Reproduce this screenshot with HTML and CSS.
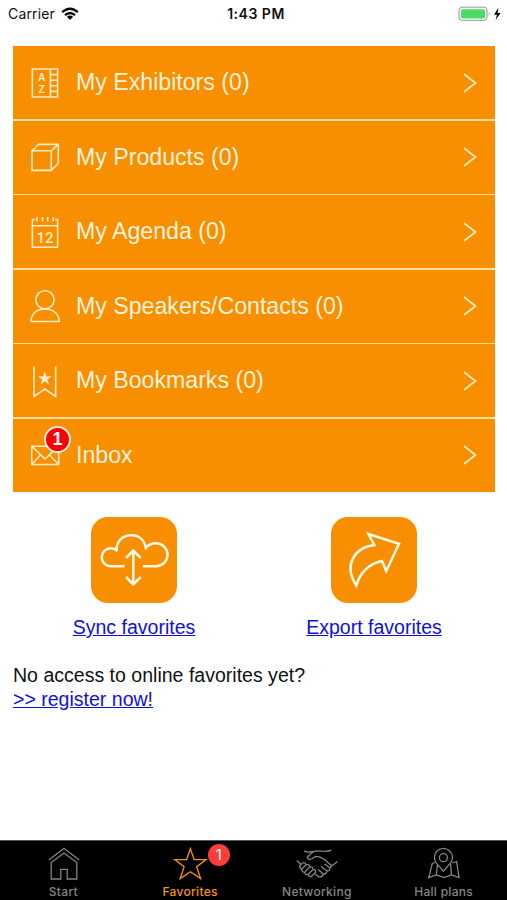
FILE: index.html
```
<!DOCTYPE html>
<html lang="en">
  <head>
    <meta charset="UTF-8" />
    <meta name="viewport" content="width=device-width, initial-scale=1.0" />
    <title>Favorites</title>
    <link rel="stylesheet" href="styles.css">
  </head>
  <body>
    <header class="status">
      <div class="carrier">
        <span>Carrier</span>
        <svg width="18" height="14" viewBox="0 0 18 14" fill="none" stroke="#000" stroke-width="2.3">
          <path d="M1.2 5.2Q9-1.8 16.8 5.2M4 8.2Q9 3.8 14 8.2" />
          <path d="M5.9 9.7Q9 7.2 12.1 9.7L9 13Z" fill="#000" stroke="none" />
        </svg>
      </div>
      <div class="time">1:43 PM</div>
      <div class="power">
        <svg width="44" height="16" viewBox="0 0 44 16">
          <rect x="1" y="1.2" width="28" height="13.2" rx="3.6" fill="#fff" stroke="#a9a9a9" stroke-width="1.3" />
          <rect x="3" y="3.2" width="24" height="9.2" rx="1.6" fill="#4cd964" />
          <path d="M30.8 5.5q2 2.3 0 4.6z" fill="#a9a9a9" />
          <path d="M40.5 1.5L36 8.7h3l-1.4 5.4 5-7.2h-3.1z" fill="#000" />
        </svg>
      </div>
    </header>

    <main class="content">
      <nav class="menu">
        <a class="row">
          <svg class="icon" viewBox="0 0 36 36">
            <path d="M5.4 4H30.6V32H5.4ZM23.4 4V32M23.4 9.6h7M23.4 15.2h7M23.4 20.8h7M23.4 26.4h7" />
            <text class="letters" x="14.6" y="16">A</text>
            <text class="letters" x="14.6" y="28.4">Z</text>
          </svg>
          <span>My Exhibitors (0)</span>
          <svg class="chevron" viewBox="0 0 14 20"><path d="M1 1L12.5 10 1 19" /></svg>
        </a>
        <a class="row">
          <svg class="icon" viewBox="0 0 36 36">
            <path d="M5 11.8H24.3V31.4H5ZM5 11.8L11.7 5.4H31.3V24.5L24.3 31.4M24.3 11.8L31.3 5.4" />
          </svg>
          <span>My Products (0)</span>
          <svg class="chevron" viewBox="0 0 14 20"><path d="M1 1L12.5 10 1 19" /></svg>
        </a>
        <a class="row">
          <svg class="icon" viewBox="0 0 36 36">
            <path d="M8 5.5H5.4V33.3H30.6V5.5H28M5.4 11.8H30.6M10 3v4.5M15.5 3v4.5M20.7 3v4.5M26.2 3v4.5" />
            <text class="day" x="18" y="28.8">12</text>
          </svg>
          <span>My Agenda (0)</span>
          <svg class="chevron" viewBox="0 0 14 20"><path d="M1 1L12.5 10 1 19" /></svg>
        </a>
        <a class="row">
          <svg class="icon" viewBox="0 0 36 36">
            <circle cx="18" cy="11.8" r="9.1" />
            <path d="M4 33.5C4.2 25.5 10 21 18 21S32 25.5 32.2 33.5Z" />
          </svg>
          <span>My Speakers/Contacts (0)</span>
          <svg class="chevron" viewBox="0 0 14 20"><path d="M1 1L12.5 10 1 19" /></svg>
        </a>
        <a class="row">
          <svg class="icon" viewBox="0 0 36 36">
            <path d="M7 3.2V33.5L17.8 26 28.6 33.5V3.2" />
            <path class="solid" d="M17.8 8.4l1.7 4.9 5.1.1-4.1 3.1 1.5 5-4.2-3-4.2 3 1.5-5-4.1-3.1 5.1-.1z" />
          </svg>
          <span>My Bookmarks (0)</span>
          <svg class="chevron" viewBox="0 0 14 20"><path d="M1 1L12.5 10 1 19" /></svg>
        </a>
        <a class="row">
          <div class="with-badge">
            <svg class="icon" viewBox="0 0 36 36">
              <path d="M4.7 9.2H31.7V27.5H4.7ZM4.7 9.2L18 22 31.7 9.2M4.7 27.5L13.5 18M31.7 27.5L22.5 18" />
            </svg>
            <span class="badge">1</span>
          </div>
          <span>Inbox</span>
          <svg class="chevron" viewBox="0 0 14 20"><path d="M1 1L12.5 10 1 19" /></svg>
        </a>
      </nav>

      <div class="actions">
        <div class="action">
          <svg class="tile" viewBox="0 0 86 86">
            <path d="M33.5 49.2H19.7A9 9 0 0 1 19.7 31.2Q23.5 31.2 26.5 34M25.6 33.4C25.2 24.5 31.5 18.2 40.2 18.2 48.2 18.2 54 23.2 55 32.5M54.3 31.2C57.5 27.5 61.5 26.2 65 26.2A11.5 11.5 0 0 1 65 49.2H51.6" />
            <path d="M42.3 34V67M35 41L42.3 33.6 49.8 41M35 60L42.3 67.4 49.8 60" />
          </svg>
          <a class="link" href="#">Sync favorites</a>
        </div>
        <div class="action">
          <svg class="tile" viewBox="0 0 86 86">
            <path d="M37.3 17L68 26.7 55.2 54.2 51 44C39.5 46.5 29.5 54.5 25.3 68.6 12.5 49 22.5 30.5 43.3 28Z" />
          </svg>
          <a class="link" href="#">Export favorites</a>
        </div>
      </div>

      <p class="note">No access to online favorites yet?<br><a class="link" href="#">&gt;&gt; register now!</a></p>
    </main>

    <footer class="tabs">
      <a class="tab">
        <svg viewBox="0 0 44 36">
          <path d="M7.8 14L23 2.3 38.3 14M10.2 16.5V33H19.8V23.3H26.2V33H35.8V16.5L23 7Z" />
        </svg>
        <span>Start</span>
      </a>
      <a class="tab active">
        <svg viewBox="0 0 44 36">
          <path d="M22.4 2.8L26.2 13.6H38L28.7 20.8 32.6 32.6 22.4 25.8 12.2 32.6 16.1 20.8 6.8 13.6H18.6Z" />
        </svg>
        <span class="tab-badge">1</span>
        <span>Favorites</span>
      </a>
      <a class="tab">
        <svg viewBox="0 0 44 36">
          <path d="M9 5.2Q13 6.8 18 5.4M36.5 4.2Q32.5 5.8 26.5 5.2Q20 4 16.3 7L12.3 11.3Q13 14.4 16.5 13L20.5 10.4Q26 10.6 30 14L36 19.2Q37 21.3 34.6 21.6L29.5 18M42.5 15.5Q40.5 17 36.5 20M34.6 21.6Q35.5 25 32 25L26 20.5M32 25Q31.5 28.3 28.5 28L23 23.5M28.5 28Q27.5 31.5 24 30.8L20 28" />
          <path d="M1.8 14.5L5.5 18M5.5 22.5Q3.8 20.5 5.5 18.8L8 16.8Q10.8 16.3 11 19L6.5 23.2Q5.8 23.3 5.5 22.5M11 19Q14.6 17.8 14.8 21L9.5 26.4Q6.3 26.2 7 23M14.8 21Q18.3 20.2 18 23.5L13 28.5Q10 29 9.8 26.2M18 23.5Q21 23.2 20.7 26.2L16.5 30.5Q13.5 31 13.3 28.2" />
        </svg>
        <span>Networking</span>
      </a>
      <a class="tab">
        <svg viewBox="0 0 44 36">
          <path d="M21.4 25.2L14.2 16.8A9 9 0 1 1 28.6 16.8Z" />
          <circle cx="21.4" cy="11.7" r="4" />
          <path d="M13 16.5L10.3 17.5 6.7 31.7 14.3 29 22 31.5 29.5 29 37 31.5 34.6 15.5 30 17M14.3 29L15.4 19M29.5 29L28.6 18" />
        </svg>
        <span>Hall plans</span>
      </a>
    </footer>
  </body>
</html>
```
FILE: styles.css
```
* {
  padding: 0;
  margin: 0;
  box-sizing: border-box;
}
body {
  display: flex;
  flex-direction: column;
  height: 100vh;
  overflow: hidden;
  background-color: #fff;
  color: #111;
  font-family: "Liberation Sans", Arial, sans-serif;
}
svg {
  display: block;
  flex: none;
}
.status {
  display: grid;
  grid-template-columns: 1fr auto 1fr;
  align-items: center;
  height: 46px;
  padding: 0 5px 19px 8px;
  font-family: Inter, sans-serif;
  font-size: 14px;
}
.carrier {
  display: flex;
  align-items: center;
  gap: 6px;
  letter-spacing: 0.15px;
}
.time {
  padding-left: 2px;
  font-weight: 600;
  letter-spacing: 0.5px;
}
.power {
  display: flex;
  justify-content: flex-end;
}
.content {
  flex: 1;
  padding: 0 12px 0 13px;
}
.menu {
  display: grid;
  grid-template-rows: repeat(6, 1fr);
  gap: 1.5px;
  height: 446px;
  background-color: #ffdf9f;
}
.row {
  display: flex;
  align-items: center;
  padding: 0 18px 0 14px;
  background-color: #f78f00;
  color: #fff3dc;
  font-size: 23.15px;
}
.icon {
  width: 36px;
  height: 36px;
  margin-right: 13px;
  fill: none;
  stroke: #ffebc4;
  stroke-width: 1.6;
}
.icon text,
.icon .solid {
  fill: #ffebc4;
  stroke: none;
  text-anchor: middle;
}
.letters {
  font-size: 10.3px;
  font-weight: bold;
}
.day {
  font-family: Roboto, sans-serif;
  font-size: 15px;
  font-weight: 500;
}
.chevron {
  width: 14px;
  height: 20px;
  margin-left: auto;
  fill: none;
  stroke: #ffebc4;
  stroke-width: 1.7;
}
.with-badge {
  position: relative;
}
.badge {
  position: absolute;
  top: -11px;
  left: 17px;
  width: 27px;
  height: 27px;
  border: 2px solid #fff0e0;
  border-radius: 50%;
  background-color: #fb0007;
  color: #fff;
  font-size: 18px;
  font-weight: bold;
  line-height: 22px;
  text-align: center;
}
.actions {
  display: grid;
  grid-template-columns: 1fr 1fr;
  padding: 25px 1px 0;
}
.action {
  display: flex;
  flex-direction: column;
  align-items: center;
  gap: 12px;
  font-size: 19.5px;
  line-height: 24px;
}
.tile {
  width: 86px;
  height: 86px;
  border-radius: 17px;
  background-color: #f78f00;
  fill: none;
  stroke: #fff8e8;
  stroke-width: 2.5;
}
.link {
  color: #1010dc;
}
.note {
  padding-top: 24px;
  font-size: 19.55px;
  line-height: 24px;
}
.tabs {
  display: grid;
  grid-template-columns: repeat(4, 1fr);
  height: 60px;
  padding-top: 5px;
  border-top: 1px solid #555;
  background-color: #000;
  color: #858585;
  font-family: Inter, sans-serif;
  font-size: 12px;
  font-weight: 500;
  letter-spacing: 0.3px;
}
.tab {
  position: relative;
  display: flex;
  flex-direction: column;
  align-items: center;
  line-height: 19px;
}
.tab svg {
  width: 44px;
  height: 36px;
  fill: none;
  stroke: currentColor;
  stroke-width: 1.3;
}
.active {
  color: #f7930c;
}
.tab-badge {
  position: absolute;
  top: -2px;
  left: 81px;
  width: 22px;
  height: 22px;
  border-radius: 50%;
  background-color: #fc3d39;
  color: #fff;
  font-size: 15px;
  font-weight: 400;
  letter-spacing: 0;
  line-height: 22px;
  text-align: center;
}
```
